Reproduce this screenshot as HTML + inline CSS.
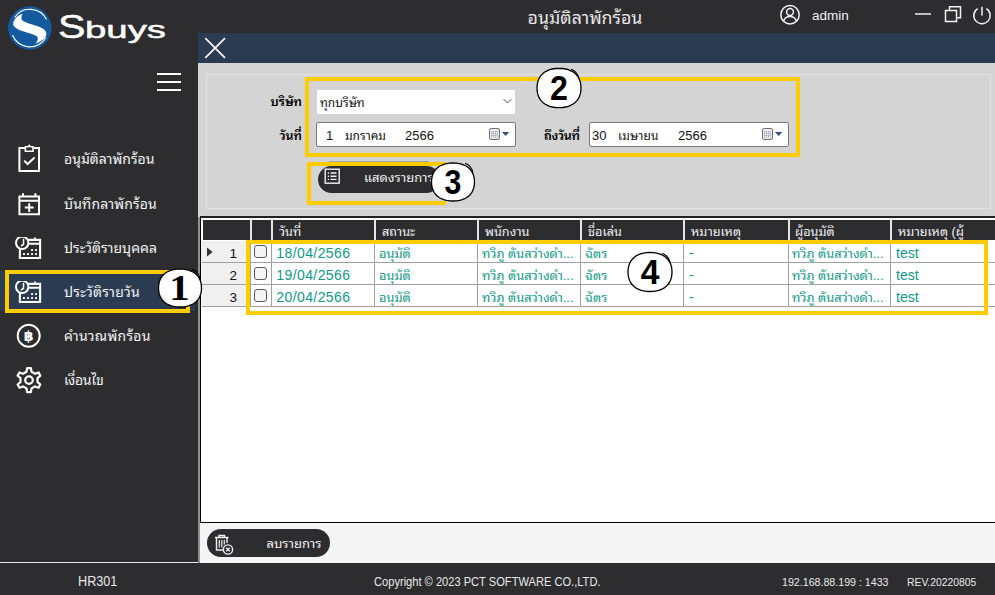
<!DOCTYPE html>
<html lang="th">
<head>
<meta charset="utf-8">
<title>อนุมัติลาพักร้อน</title>
<style>
*{box-sizing:border-box;margin:0;padding:0}
html,body{width:995px;height:595px;overflow:hidden;background:#2d2d30}
body{position:relative;font-family:"Liberation Sans","Noto Sans Thai Looped","Loma",sans-serif;font-size:13px;color:#f0f0f0}
.abs{position:absolute}
#side{left:0;top:0;width:198px;height:563px;background:#2d2d30}
#sideline{left:198px;top:217px;width:2px;height:346px;background:#909090}
#topbar{left:198px;top:0;width:797px;height:33px;background:#2d2d30}
#bluebar{left:198px;top:33px;width:797px;height:30px;background:#2b3b52}
#form{left:198px;top:63px;width:797px;height:154px;background:#d4d4d4}
#group{left:206px;top:74px;width:785px;height:135px;border:1px solid #e2e2e2}
#grid{left:200px;top:216px;width:795px;height:307px;background:#fff;border:2px solid #000;border-right:0;border-top-color:#222;border-left-width:1px;border-bottom-width:1px}
#gridhead{left:203px;top:220px;width:792px;height:20px;background:#2d2d30}
#bottom{left:200px;top:523px;width:795px;height:40px;background:#f4f4f4}
#status{left:0;top:563px;width:995px;height:32px;background:#2d2d30}
#statusline{left:0;top:562px;width:198px;height:1px;background:#e8e8e8}
.menu{left:0;width:198px;height:44px}
.menu .t{position:absolute;left:64px;top:0;line-height:45px;font-size:14px;color:#f2f2f2;white-space:nowrap}
.menu svg{position:absolute;left:15px;top:8px}
#sel{left:0;top:271px;width:195px;height:40px;background:#2b3b52}
.ybox{border:4px solid #ffcc00}
.lbl{color:#000;font-weight:600;font-size:12.5px;white-space:nowrap;line-height:26px;height:26px}
.inp{background:#fff;color:#111;font-size:12px;line-height:26px;height:25px;white-space:nowrap}
.date{border:1px solid #7a7a7a;border-radius:2px}
.btn{background:#2d2d30;border-radius:14px;height:28px;color:#f0f0f0;font-size:13px;line-height:28px;white-space:nowrap}
.num{font-family:"Liberation Serif",serif;font-weight:bold;color:#000;font-size:36px}
.hc{position:absolute;top:220px;height:20px;line-height:25px;font-size:12.7px;color:#f0f0f0;white-space:nowrap;border-left:2px solid #e4e4e4;padding-left:6px}
.row{position:absolute;left:202px;width:793px;height:22px;border-bottom:1px solid #a0a0a0}
.c{position:absolute;top:0;height:21px;line-height:25px;font-size:12.8px;color:#0d9a86;white-space:nowrap;border-left:1px solid #a0a0a0;padding-left:4px}
.rh{position:absolute;left:-1px;top:0;width:49px;height:21px;background:#f0f0f0;color:#111;font-size:13.5px;line-height:26px;text-align:right;padding-right:13px}
.cb{position:absolute;left:3px;top:4px;width:13px;height:13px;border:1px solid #5a5a5a;border-radius:3px;background:#f4f4f4}
.c.l{font-size:14px;line-height:24px}
.c.d{letter-spacing:0.4px;text-indent:-0.7px}
.st{font-size:12px;color:#e8e8e8;line-height:32px;white-space:nowrap;transform-origin:0 50%}
</style>
</head>
<body>
<div id="side" class="abs"></div>
<div id="topbar" class="abs"></div>
<div id="bluebar" class="abs"></div>
<div id="form" class="abs"></div>
<div id="group" class="abs"></div>
<div id="sideline" class="abs"></div>
<div id="grid" class="abs"></div>
<div id="gridhead" class="abs"></div>
<div id="bottom" class="abs"></div>
<div id="status" class="abs"></div>
<div id="statusline" class="abs"></div>
<svg class="abs" style="left:0;top:0" width="198" height="60" viewBox="0 0 198 60">
<circle cx="29.8" cy="28" r="21.7" fill="#135aa0"/>
<path d="M14.5 17.5A18.6 18.6 0 0 1 46.5 19.5M12.5 35A18.6 18.6 0 0 0 46 37.5" fill="none" stroke="#fff" stroke-width="1.1"/>
<path d="M22.8 13.8C19 14.5 14.5 18 13.2 23C12.5 27 18 30 25.9 32.2C33 34.2 39 35.5 37.7 39.5C37.3 41 36.5 42.5 35.5 43.5C40 42.5 45.5 39 46.4 34.3C47 30 41 27 34.6 25.2C28 23.3 22 21.5 21.5 19C21.2 17 21.8 15 22.8 13.8Z" fill="#fff"/>
<text x="58" y="38" font-family="'Liberation Sans',sans-serif" font-size="33" fill="#fff" stroke="#fff" stroke-width="0.5" textLength="27.5" lengthAdjust="spacingAndGlyphs">S</text>
<text x="85" y="38" font-family="'Liberation Sans',sans-serif" font-size="24.5" fill="#fff" stroke="#fff" stroke-width="0.5" textLength="81" lengthAdjust="spacingAndGlyphs">buys</text>
</svg>
<svg class="abs" style="left:155px;top:70px" width="30" height="24" viewBox="0 0 30 24"><path d="M2 4H26M2 12H26M2 20H26" stroke="#fff" stroke-width="2" fill="none"/></svg>
<div class="abs" style="left:385px;top:0;width:400px;height:33px;line-height:36px;text-align:center;font-size:17.8px;color:#e6e6e6">อนุมัติลาพักร้อน</div>
<svg class="abs" style="left:775px;top:0" width="220" height="33" viewBox="775 0 220 33" fill="none" stroke="#f2f2f2" stroke-width="1.5">
<circle cx="790" cy="14.7" r="9.2"/><circle cx="790" cy="12" r="3.4"/><path d="M783.5 21.5C784.5 17.5 787 16.5 790 16.5C793 16.5 795.5 17.5 796.5 21.5"/>
<path d="M915 14H931"/>
<path d="M945.5 10.5H956.5V21.5H945.5Z M949.5 10.5V6.8H960.5V17.8H956.5"/>
<path d="M977.6 8.6A8.2 8.2 0 1 0 986.4 8.6M982 6.8V15.5"/>
</svg>
<div class="abs" style="left:812px;top:0;height:33px;line-height:31.5px;font-size:13.5px;color:#f0f0f0">admin</div>
<svg class="abs" style="left:203px;top:36px" width="24" height="24" viewBox="0 0 24 24"><path d="M2.3 2.2L22 21.8M22 2.2L2.3 21.8" stroke="#f0f0f0" stroke-width="1.9" fill="none"/></svg>
<div id="sel" class="abs"></div>
<div class="abs ybox" style="left:5px;top:270px;width:185px;height:43px"></div>
<div class="abs menu" style="top:137px"><svg style="left:15px;top:4px" width="30" height="32" viewBox="0 0 30 32"><g fill="none" stroke="#fff" stroke-width="2"><path d="M10 7H4.4V29.9H24V7H19"/><path d="M10.4 10.2V5.8H13L14.2 4.4L15.4 5.8H18V10.2Z" stroke-width="1.6"/><path d="M9.2 19.6L12.6 23L19.6 16.6"/></g></svg><span class="t">อนุมัติลาพักร้อน</span></div>
<div class="abs menu" style="top:181px"><svg style="left:15px;top:5px" width="30" height="32" viewBox="0 0 30 32"><g fill="none" stroke="#fff" stroke-width="2"><path d="M4.4 10.4H24V28.2H4.4Z"/><path d="M4.4 14.8H24M8 7.2V11M20.4 7.2V11" /><path d="M14.2 17.2V26M9.8 21.6H18.6"/></g></svg><span class="t" style="top:1px;letter-spacing:0.15px">บันทึกลาพักร้อน</span></div>
<div class="abs menu" style="top:225px"><svg style="left:15px;top:12px" width="30" height="32" viewBox="0 0 30 32"><g fill="none" stroke="#fff" stroke-width="2.1"><path d="M4.9 2.9H25.1V21H4.9Z M4.9 6.7H25.1" /><path d="M20 0.6V3.5" stroke-width="1.8"/></g><circle cx="7.2" cy="5.8" r="6.2" fill="#2d2d30" stroke="#fff" stroke-width="2"/><path d="M8.5 1.8V7.4L6 9" fill="none" stroke="#fff" stroke-width="1.5"/><g fill="#fff"><rect x="8" y="16.1" width="1.9" height="1.9"/><rect x="12" y="16.1" width="1.9" height="1.9"/><rect x="16.1" y="16.1" width="1.9" height="1.9"/><rect x="20.1" y="16.1" width="1.9" height="1.9"/><rect x="16.1" y="12.1" width="1.9" height="1.9"/><rect x="20.1" y="12.1" width="1.9" height="1.9"/></g></svg><span class="t" style="top:1px;letter-spacing:0px">ประวัติรายบุคคล</span></div>
<div class="abs menu" style="top:269px"><svg style="left:15px;top:12px" width="30" height="32" viewBox="0 0 30 32"><g fill="none" stroke="#fff" stroke-width="2.1"><path d="M4.9 2.9H25.1V21H4.9Z M4.9 6.7H25.1" /><path d="M20 0.6V3.5" stroke-width="1.8"/></g><circle cx="7.2" cy="5.8" r="6.2" fill="#2b3b52" stroke="#fff" stroke-width="2"/><path d="M8.5 1.8V7.4L6 9" fill="none" stroke="#fff" stroke-width="1.5"/><g fill="#fff"><rect x="8" y="16.1" width="1.9" height="1.9"/><rect x="12" y="16.1" width="1.9" height="1.9"/><rect x="16.1" y="16.1" width="1.9" height="1.9"/><rect x="20.1" y="16.1" width="1.9" height="1.9"/><rect x="16.1" y="12.1" width="1.9" height="1.9"/><rect x="20.1" y="12.1" width="1.9" height="1.9"/></g></svg><span class="t" style="top:1px;letter-spacing:0.25px">ประวัติรายวัน</span></div>
<div class="abs menu" style="top:313px"><svg style="left:15px;top:8px" width="30" height="32" viewBox="0 0 30 32"><g fill="none" stroke="#fff" stroke-width="2"><circle cx="13.7" cy="14.8" r="11"/></g><text x="13.7" y="20" text-anchor="middle" font-family="'Liberation Sans','DejaVu Sans',sans-serif" font-weight="bold" font-size="14" fill="#fff">฿</text></svg><span class="t" style="top:1px;letter-spacing:0.25px">คำนวณพักร้อน</span></div>
<div class="abs menu" style="top:357px"><svg style="left:15px;top:10px" width="30" height="32" viewBox="0 0 30 32"><g fill="none" stroke="#fff" stroke-width="2.2" stroke-linejoin="round"><path d="M11.5 4.8L12.1 1.1L15.9 1.1L16.5 4.8L20.0 6.8L23.5 5.4L25.4 8.7L22.5 11.1L22.5 15.1L25.4 17.5L23.5 20.8L20.0 19.4L16.5 21.4L15.9 25.1L12.1 25.1L11.5 21.4L8.0 19.4L4.5 20.8L2.6 17.5L5.5 15.1L5.5 11.1L2.6 8.7L4.5 5.4L8.0 6.8Z"/><circle cx="14" cy="13.1" r="3.8"/></g></svg><span class="t" style="top:1px;letter-spacing:-0.3px">เงื่อนไข</span></div>

<div class="abs lbl" style="left:230px;top:89px;width:72px;text-align:right">บริษัท</div>
<div class="abs lbl" style="left:230px;top:123px;width:72px;text-align:right">วันที่</div>
<div class="abs lbl" style="left:544px;top:123px;letter-spacing:-0.3px">ถึงวันที่</div>
<div class="abs inp" style="left:317px;top:90px;width:198px;height:23.5px;padding-left:3px">ทุกบริษัท</div>
<svg class="abs" style="left:502px;top:97px" width="12" height="8" viewBox="0 0 12 8"><path d="M1.5 2L5.5 6L9.5 2" fill="none" stroke="#555" stroke-width="1"/></svg>
<div class="abs inp date" style="left:316px;top:122px;width:200px"><span class="abs" style="left:9px;font-size:13px">1</span><span class="abs" style="left:28px">มกราคม</span><span class="abs" style="left:88px;font-size:13px">2566</span></div>
<div class="abs inp date" style="left:589px;top:122px;width:200px"><span class="abs" style="left:2px;font-size:13px">30</span><span class="abs" style="left:28px;letter-spacing:0.2px">เมษายน</span><span class="abs" style="left:88px;font-size:13px">2566</span></div>
<svg class="abs" style="left:489px;top:128px" width="22" height="13" viewBox="0 0 22 13"><rect x="0.6" y="0.6" width="9.8" height="10.8" rx="1.2" fill="#f3f5fb" stroke="#6c5f5c" stroke-width="1"/><rect x="2" y="3" width="6.9" height="6.6" fill="#b6bac6"/><g fill="#fff"><rect x="2.9" y="3.9" width="1.1" height="1.1"/><rect x="5" y="3.9" width="1.1" height="1.1"/><rect x="7.1" y="3.9" width="1.1" height="1.1"/><rect x="2.9" y="6" width="1.1" height="1.1"/><rect x="5" y="6" width="1.1" height="1.1"/><rect x="7.1" y="6" width="1.1" height="1.1"/><rect x="2.9" y="8.1" width="1.1" height="1.1"/><rect x="5" y="8.1" width="1.1" height="1.1"/><rect x="7.1" y="8.1" width="1.1" height="1.1"/></g><path d="M13 3.9H20.3L16.65 8.1Z" fill="#3b4f7c"/></svg><svg class="abs" style="left:762px;top:128px" width="22" height="13" viewBox="0 0 22 13"><rect x="0.6" y="0.6" width="9.8" height="10.8" rx="1.2" fill="#f3f5fb" stroke="#6c5f5c" stroke-width="1"/><rect x="2" y="3" width="6.9" height="6.6" fill="#b6bac6"/><g fill="#fff"><rect x="2.9" y="3.9" width="1.1" height="1.1"/><rect x="5" y="3.9" width="1.1" height="1.1"/><rect x="7.1" y="3.9" width="1.1" height="1.1"/><rect x="2.9" y="6" width="1.1" height="1.1"/><rect x="5" y="6" width="1.1" height="1.1"/><rect x="7.1" y="6" width="1.1" height="1.1"/><rect x="2.9" y="8.1" width="1.1" height="1.1"/><rect x="5" y="8.1" width="1.1" height="1.1"/><rect x="7.1" y="8.1" width="1.1" height="1.1"/></g><path d="M13 3.9H20.3L16.65 8.1Z" fill="#3b4f7c"/></svg>
<div class="abs" style="left:329px;top:161px;width:100px;height:1px;background:#a4a4a8"></div>
<div class="abs btn" style="left:318px;top:166px;width:122px;height:26.7px;line-height:24px"><span class="abs" style="left:46px">แสดงรายการ</span></div>
<svg class="abs" style="left:324px;top:168px" width="17" height="17" viewBox="0 0 17 17" fill="none" stroke="#f0f0f0"><rect x="1.2" y="1.2" width="14" height="14" stroke-width="1.4"/><path d="M6.5 5H12.5M6.5 8.2H12.5M6.5 11.4H12.5" stroke-width="1.4"/><path d="M3.8 5H5M3.8 8.2H5M3.8 11.4H5" stroke-width="1.4"/></svg>

<div class="hc" style="left:250px;width:21px;padding-left:0px"></div>
<div class="hc" style="left:271px;width:103px;padding-left:6px">วันที่</div>
<div class="hc" style="left:374px;width:103px;padding-left:6px">สถานะ</div>
<div class="hc" style="left:477px;width:103px;padding-left:6px">พนักงาน</div>
<div class="hc" style="left:580px;width:103px;padding-left:6px">ชื่อเล่น</div>
<div class="hc" style="left:683px;width:105px;padding-left:6px">หมายเหตุ</div>
<div class="hc" style="left:788px;width:102px;padding-left:5px">ผู้อนุมัติ</div>
<div class="hc" style="left:890px;width:105px;padding-left:6px">หมายเหตุ (ผู้</div>
<div class="row" style="top:241px"><div class="rh">1</div><svg class="abs" style="left:4px;top:6px" width="8" height="10" viewBox="0 0 8 10"><path d="M1 0.5L6.6 5L1 9.5Z" fill="#333"/></svg><div class="c" style="left:48px;width:21px"><span class="cb"></span></div><div class="c l d" style="left:69px;width:103px;padding-left:5px">18/04/2566</div><div class="c" style="left:172px;width:103px;padding-left:4px">อนุมัติ</div><div class="c" style="left:275px;width:103px;padding-left:4px">ทวิภู ตันสว่างดำ...</div><div class="c" style="left:378px;width:103px;padding-left:4px">ฉัตร</div><div class="c l" style="left:481px;width:105px;padding-left:5px">-</div><div class="c" style="left:586px;width:102px;padding-left:3px">ทวิภู ตันสว่างดำ...</div><div class="c l" style="left:688px;width:105px;padding-left:5px">test</div></div>
<div class="row" style="top:263px"><div class="rh">2</div><div class="c" style="left:48px;width:21px"><span class="cb"></span></div><div class="c l d" style="left:69px;width:103px;padding-left:5px">19/04/2566</div><div class="c" style="left:172px;width:103px;padding-left:4px">อนุมัติ</div><div class="c" style="left:275px;width:103px;padding-left:4px">ทวิภู ตันสว่างดำ...</div><div class="c" style="left:378px;width:103px;padding-left:4px">ฉัตร</div><div class="c l" style="left:481px;width:105px;padding-left:5px">-</div><div class="c" style="left:586px;width:102px;padding-left:3px">ทวิภู ตันสว่างดำ...</div><div class="c l" style="left:688px;width:105px;padding-left:5px">test</div></div>
<div class="row" style="top:285px"><div class="rh">3</div><div class="c" style="left:48px;width:21px"><span class="cb"></span></div><div class="c l d" style="left:69px;width:103px;padding-left:5px">20/04/2566</div><div class="c" style="left:172px;width:103px;padding-left:4px">อนุมัติ</div><div class="c" style="left:275px;width:103px;padding-left:4px">ทวิภู ตันสว่างดำ...</div><div class="c" style="left:378px;width:103px;padding-left:4px">ฉัตร</div><div class="c l" style="left:481px;width:105px;padding-left:5px">-</div><div class="c" style="left:586px;width:102px;padding-left:3px">ทวิภู ตันสว่างดำ...</div><div class="c l" style="left:688px;width:105px;padding-left:5px">test</div></div>
<div class="abs btn" style="left:207px;top:529px;width:123px;line-height:30px"><span class="abs" style="left:59.5px">ลบรายการ</span></div>
<svg class="abs" style="left:213px;top:533px" width="24" height="24" viewBox="0 0 24 24" fill="none" stroke="#f0f0f0" stroke-width="1.4"><path d="M2 4.5H15.5M6 4.5V2.5H11.5V4.5M3.5 4.5V17H10M14 4.5V10"/><path d="M6.3 7V14.5M8.8 7V14.5M11.3 7V11.5" stroke-width="1.2"/><circle cx="15" cy="16.5" r="4.6" fill="#2d2d30"/><path d="M13.2 14.7L16.8 18.3M16.8 14.7L13.2 18.3" stroke-width="1.3"/></svg>
<div id="s1" class="abs st" style="left:77.5px;top:566px;font-size:13.8px;transform:scaleX(0.917)">HR301</div>
<div id="s2" class="abs st" style="left:374px;top:565.5px;font-size:12.6px;transform:scaleX(0.882)">Copyright © 2023 PCT SOFTWARE CO.,LTD.</div>
<div id="s3" class="abs st" style="left:781.5px;top:566px;font-size:11.8px;transform:scaleX(0.902)">192.168.88.199 : 1433</div>
<div id="s4" class="abs st" style="left:906.5px;top:566px;font-size:11.8px;transform:scaleX(0.879)">REV.20220805</div>

<div class="abs ybox" style="left:305px;top:77px;width:495px;height:80px"></div>
<div class="abs ybox" style="left:307px;top:162px;width:139px;height:43px;border-right:0"></div>
<div class="abs ybox" style="left:246px;top:240px;width:742px;height:75px"></div>

<svg class="abs" style="left:154.6px;top:265.2px" width="50" height="46" viewBox="-25 -23 50 46"><path d="M21.5 0.0L21.3 3.1L20.8 5.7L20.0 8.1L18.9 10.3L17.5 12.2L15.8 14.0L13.8 15.5L11.6 16.7L9.2 17.7L6.5 18.4L3.5 18.9L0.0 19.0L-3.5 18.9L-6.5 18.4L-9.2 17.7L-11.6 16.7L-13.8 15.5L-15.8 14.0L-17.5 12.2L-18.9 10.3L-20.0 8.1L-20.8 5.7L-21.3 3.1L-21.5 0.0L-21.3 -3.1L-20.8 -5.7L-20.0 -8.1L-18.9 -10.3L-17.5 -12.2L-15.8 -14.0L-13.8 -15.5L-11.6 -16.7L-9.2 -17.7L-6.5 -18.4L-3.5 -18.9L-0.0 -19.0L3.5 -18.9L6.5 -18.4L9.2 -17.7L11.6 -16.7L13.8 -15.5L15.8 -14.0L17.5 -12.2L18.9 -10.3L20.0 -8.1L20.8 -5.7L21.3 -3.1Z" fill="#fff" stroke="#000" stroke-width="1.3" stroke-linejoin="round"/><path d="M12.2 -18.8C15.5 -17.5 19 -14 20 -9.5" fill="none" stroke="#000" stroke-width="1.1"/><text x="-0.5" y="12.3" text-anchor="middle" font-family="'Liberation Serif',serif" font-weight="bold" font-size="36.5" fill="#000" transform="scale(1.12 1)">1</text></svg>
<svg class="abs" style="left:533.7px;top:64.7px" width="50" height="46" viewBox="-25 -23 50 46"><path d="M22.0 0.0L21.8 3.2L21.3 5.9L20.5 8.3L19.4 10.6L17.9 12.6L16.2 14.4L14.2 16.0L11.9 17.2L9.4 18.3L6.6 19.0L3.6 19.5L0.0 19.6L-3.6 19.5L-6.6 19.0L-9.4 18.3L-11.9 17.2L-14.2 16.0L-16.2 14.4L-17.9 12.6L-19.4 10.6L-20.5 8.3L-21.3 5.9L-21.8 3.2L-22.0 0.0L-21.8 -3.2L-21.3 -5.9L-20.5 -8.3L-19.4 -10.6L-17.9 -12.6L-16.2 -14.4L-14.2 -16.0L-11.9 -17.2L-9.4 -18.3L-6.6 -19.0L-3.6 -19.5L-0.0 -19.6L3.6 -19.5L6.6 -19.0L9.4 -18.3L11.9 -17.2L14.2 -16.0L16.2 -14.4L17.9 -12.6L19.4 -10.6L20.5 -8.3L21.3 -5.9L21.8 -3.2Z" fill="#fff" stroke="#000" stroke-width="1.3" stroke-linejoin="round"/><path d="M12.2 -18.8C15.5 -17.5 19 -14 20 -9.5" fill="none" stroke="#000" stroke-width="1.1"/><text x="0" y="11.9" text-anchor="middle" font-family="'Liberation Sans',sans-serif" font-weight="bold" font-size="33.6" fill="#000" transform="scale(0.96 1.03)">2</text></svg>
<svg class="abs" style="left:427.8px;top:159.2px" width="50" height="46" viewBox="-25 -23 50 46"><path d="M21.5 0.0L21.3 3.1L20.8 5.7L20.0 8.1L18.9 10.3L17.5 12.2L15.8 14.0L13.8 15.5L11.6 16.7L9.2 17.7L6.5 18.4L3.5 18.9L0.0 19.0L-3.5 18.9L-6.5 18.4L-9.2 17.7L-11.6 16.7L-13.8 15.5L-15.8 14.0L-17.5 12.2L-18.9 10.3L-20.0 8.1L-20.8 5.7L-21.3 3.1L-21.5 0.0L-21.3 -3.1L-20.8 -5.7L-20.0 -8.1L-18.9 -10.3L-17.5 -12.2L-15.8 -14.0L-13.8 -15.5L-11.6 -16.7L-9.2 -17.7L-6.5 -18.4L-3.5 -18.9L-0.0 -19.0L3.5 -18.9L6.5 -18.4L9.2 -17.7L11.6 -16.7L13.8 -15.5L15.8 -14.0L17.5 -12.2L18.9 -10.3L20.0 -8.1L20.8 -5.7L21.3 -3.1Z" fill="#fff" stroke="#000" stroke-width="1.3" stroke-linejoin="round"/><path d="M12.2 -18.8C15.5 -17.5 19 -14 20 -9.5" fill="none" stroke="#000" stroke-width="1.1"/><text x="0" y="11.9" text-anchor="middle" font-family="'Liberation Sans',sans-serif" font-weight="bold" font-size="33.6" fill="#000" transform="scale(0.90 1.04)">3</text></svg>
<svg class="abs" style="left:624.8px;top:248.7px" width="50" height="46" viewBox="-25 -23 50 46"><path d="M22.0 0.0L21.8 3.2L21.3 5.9L20.5 8.3L19.4 10.5L17.9 12.5L16.2 14.3L14.2 15.9L11.9 17.2L9.4 18.2L6.6 18.9L3.6 19.4L0.0 19.5L-3.6 19.4L-6.6 18.9L-9.4 18.2L-11.9 17.2L-14.2 15.9L-16.2 14.3L-17.9 12.5L-19.4 10.5L-20.5 8.3L-21.3 5.9L-21.8 3.2L-22.0 0.0L-21.8 -3.2L-21.3 -5.9L-20.5 -8.3L-19.4 -10.5L-17.9 -12.5L-16.2 -14.3L-14.2 -15.9L-11.9 -17.2L-9.4 -18.2L-6.6 -18.9L-3.6 -19.4L-0.0 -19.5L3.6 -19.4L6.6 -18.9L9.4 -18.2L11.9 -17.2L14.2 -15.9L16.2 -14.3L17.9 -12.5L19.4 -10.5L20.5 -8.3L21.3 -5.9L21.8 -3.2Z" fill="#fff" stroke="#000" stroke-width="1.3" stroke-linejoin="round"/><path d="M12.2 -18.8C15.5 -17.5 19 -14 20 -9.5" fill="none" stroke="#000" stroke-width="1.1"/><text x="0" y="11.6" text-anchor="middle" font-family="'Liberation Sans',sans-serif" font-weight="bold" font-size="33.6" fill="#000" transform="scale(1.00 1.02)">4</text></svg>
</body>
</html>
